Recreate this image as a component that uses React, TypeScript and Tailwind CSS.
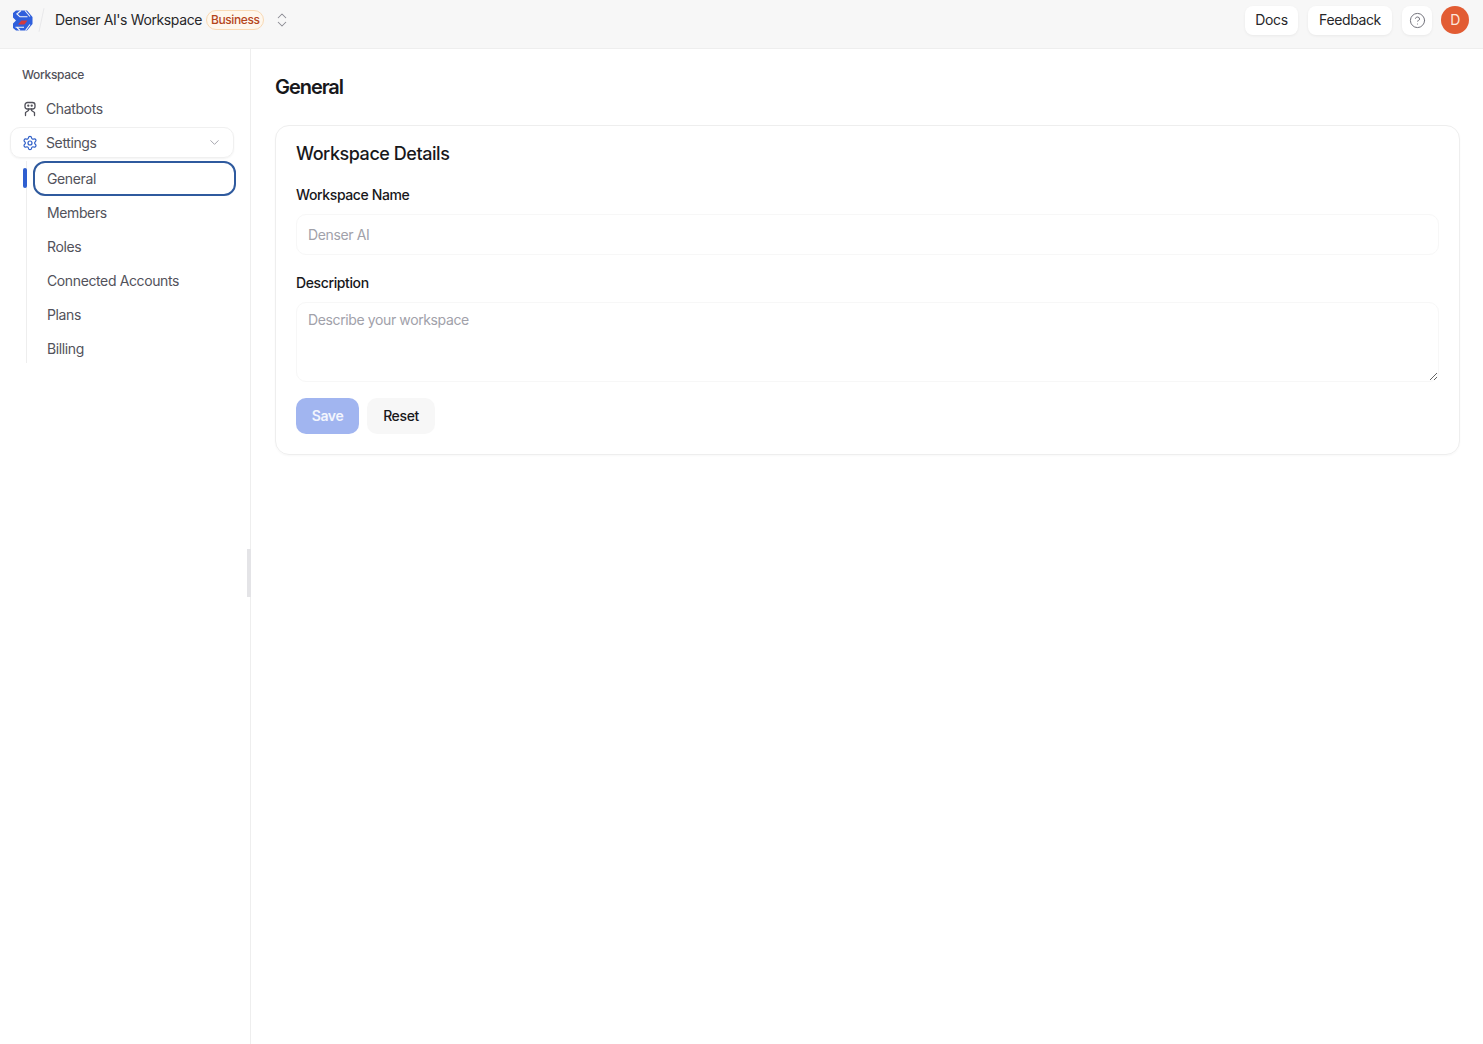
import { ChevronDown, ChevronsUpDown, CircleHelp, Settings } from "lucide-react";

const SUB_ITEMS = ["Members", "Roles", "Connected Accounts", "Plans", "Billing"];

function Logo() {
  return (
    <svg width="21" height="21" viewBox="0 0 21 21" fill="none">
      <path d="M1 3L4 0.500H15L20.500 7V14L15 20.500H4L1 18V13.500L4 10.500L1 7.500z" fill="#2f5fdc" />
      <path d="M4.500 3.500L8 6.800H15.500M13 0.500L18 6.500M18 14.500L13.500 20.500M3.500 17.200H12M9 0.500L5.500 3.500M8 20.500L5 17.500" stroke="#f7f7f7" strokeWidth="1.100" />
      <path d="M6 14.500L9.500 10.500H15.500L12.500 14.500z" fill="#d23b3f" />
    </svg>
  );
}

function BotIcon() {
  return (
    <svg width="16" height="16" viewBox="0 0 16 16" fill="none" stroke="#52525b" strokeWidth="1.300" strokeLinecap="round" strokeLinejoin="round">
      <rect x="3" y="1.500" width="10" height="6.500" rx="2.500" />
      <circle cx="6.300" cy="4.700" r="0.500" fill="#52525b" />
      <circle cx="9.700" cy="4.700" r="0.500" fill="#52525b" />
      <path d="M6.500 8v1.500L3.500 11.500v3M9.500 8v1.500l3 2v3" />
    </svg>
  );
}

export default function App() {
  return (
    <div className="h-[1044px] flex flex-col bg-white text-[#18181b] tracking-[-0.38px] font-['Inter',sans-serif] overflow-hidden">
      <header className="h-[49px] shrink-0 flex items-center bg-[#f7f7f7] border-b border-[#eeeeee] pb-[8px] pl-[12px] pr-[14px]">
        <Logo />
        <div className="w-px h-[24px] ml-[8px] bg-[#e8e8ea] rotate-[12deg]" />
        <span className="ml-[13px] text-sm text-[#27272a]">Denser AI's Workspace</span>
        <span className="ml-[4px] h-[20px] px-[4px] flex items-center rounded-full border border-[#f8d9b4] bg-[#fef7ed] text-xs font-medium tracking-[-0.42px] text-[#b5461c]">Business</span>
        <ChevronsUpDown size={18} strokeWidth={1.400} className="ml-[9px] text-[#8b8b93]" />
        <div className="ml-auto flex items-center">
          <button className="h-[29px] w-[53px] rounded-lg bg-white text-sm text-[#27272a] shadow-[0_1px_3px_rgba(0,0,0,0.06)]">Docs</button>
          <button className="ml-[10px] h-[29px] w-[84px] rounded-lg bg-white text-sm text-[#27272a] shadow-[0_1px_3px_rgba(0,0,0,0.06)]">Feedback</button>
          <button className="ml-[10px] w-[30px] h-[29px] flex items-center justify-center rounded-lg bg-white shadow-[0_1px_3px_rgba(0,0,0,0.06)]">
            <CircleHelp size={17} strokeWidth={1.400} className="text-[#71717a]" />
          </button>
          <div className="ml-[9px] w-[28px] h-[28px] rounded-full bg-[#e25c33] flex items-center justify-center text-sm text-[#fde7dc]">D</div>
        </div>
      </header>

      <div className="flex-1 flex min-h-0">
        <aside className="relative w-[251px] shrink-0 border-r border-[#eeeeee] pl-[10px] pr-[16px]">
          <div className="mt-[18px] ml-[12px] h-[16px] leading-[16px] text-xs font-medium tracking-[-0.33px] text-[#52525b]">Workspace</div>
          <div className="mt-[9px] h-[34px] pl-[12px] flex items-center gap-[8px] text-sm text-[#52525b]">
            <BotIcon />
            Chatbots
          </div>
          <div className="mt-px h-[31px] pl-[11px] pr-[11px] flex items-center gap-[8px] rounded-[10px] border border-[#f0f0f0] shadow-[0_1px_2px_rgba(0,0,0,0.05)] text-sm text-[#52525b]">
            <Settings size={16} strokeWidth={1.800} className="text-[#2f5fc8]" />
            Settings
            <ChevronDown size={15} strokeWidth={1.500} className="ml-auto text-[#a1a1aa]" />
          </div>
          <div className="relative h-[202px] ml-[16px] mt-[6px] border-l border-[#eeeeee] pl-[6px] -mr-[2px]">
            <div className="absolute -left-[4px] top-[7px] w-[4px] h-[20px] rounded-full bg-[#2f5fd0]" />
            <div className="h-[35px] -mt-[3px] pl-[12px] flex items-center rounded-[12px] border-2 border-[#2f5a9e] text-sm text-[#52525b]">General</div>
            {SUB_ITEMS.map((item) => (
              <div key={item} className="h-[34px] pl-[14px] flex items-center text-sm text-[#52525b]">{item}</div>
            ))}
          </div>
          <div className="absolute -right-px top-[500px] w-[4px] h-[48px] bg-[#e4e4e7]" />
        </aside>

        <main className="flex-1 min-w-0 pl-[24px] pr-[23px]">
          <h1 className="mt-[24px] h-[28px] leading-[28px] text-xl font-semibold tracking-[-1.05px] text-[#18181b]">General</h1>
          <section className="mt-[24px] h-[330px] rounded-[14px] border border-[#eeeeee] shadow-[0_1px_2px_rgba(0,0,0,0.03)] px-[20px]">
            <h2 className="mt-[15px] h-[26px] leading-[26px] text-lg font-medium tracking-[-0.45px] text-[#18181b]">Workspace Details</h2>
            <label className="block mt-[18px] h-[20px] leading-[20px] text-sm font-medium text-[#18181b]">Workspace Name</label>
            <div className="mt-[9px] h-[41px] rounded-[10px] border border-[#f7f7f7] px-[11px] flex items-center text-sm text-[#a1a1aa]">Denser AI</div>
            <label className="block mt-[18px] h-[20px] leading-[20px] text-sm font-medium text-[#18181b]">Description</label>
            <textarea
              className="block mt-[9px] w-full h-[80px] rounded-[10px] border border-[#f7f7f7] px-[11px] py-[7px] text-sm outline-none placeholder:text-[#a1a1aa]"
              placeholder="Describe your workspace"
            />
            <div className="mt-[16px] flex gap-[8px]">
              <button className="h-[36px] w-[63px] rounded-[10px] bg-[#a1b5f0] text-sm font-semibold text-[#f3f5fd]">Save</button>
              <button className="h-[36px] w-[68px] rounded-[10px] bg-[#f7f7f7] text-sm font-medium text-[#18181b]">Reset</button>
            </div>
          </section>
        </main>
      </div>
    </div>
  );
}
